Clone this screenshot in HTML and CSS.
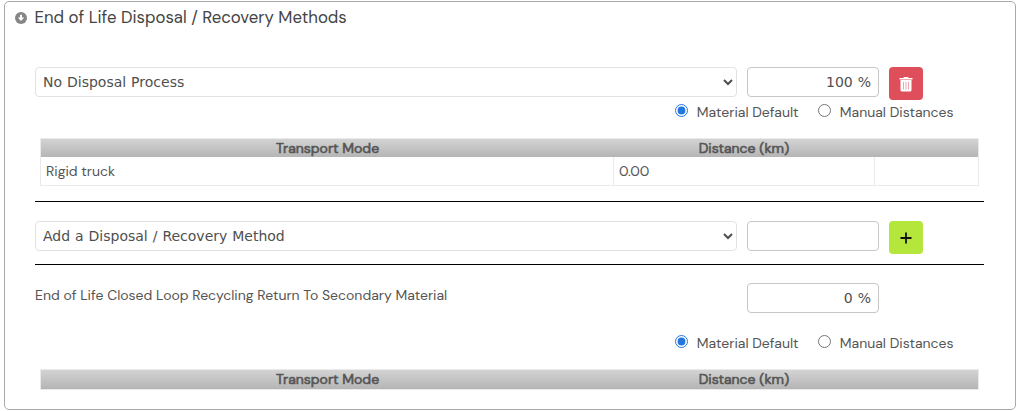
FILE: index.html
```html
<!DOCTYPE html>
<html lang="en">
<head>
<meta charset="utf-8">
<title>End of Life Disposal / Recovery Methods</title>
<link rel="stylesheet" href="styles.css">
</head>
<body>
<section class="panel">
  <header class="panel-title">
    <svg class="toggle" viewBox="0 0 12 12"><circle cx="6" cy="6" r="6" fill="#858585"/><path d="M5 2.8h2v2.8h2.2L6 9 2.8 5.600H5z" fill="#fff"/></svg>
    <h1>End of Life Disposal / Recovery Methods</h1>
  </header>
  <div class="row">
    <select class="method"><option>No Disposal Process</option></select>
    <input class="percent" type="text" value="100 %">
    <button class="btn remove" aria-label="Remove"><svg width="14" height="16" viewBox="0 0 14 16"><path d="M.5 2h3.800l.7-1h4l.7 1h3.800v1.500H.5z" fill="#fff"/><path d="M1.500 4h11v10q0 1.500-1.500 1.500H3q-1.500 0-1.500-1.500z" fill="#fff"/><path d="M4.500 6v7.500M7 6v7.500M9.500 6v7.500" stroke="#eba6ac"/></svg></button>
  </div>
  <div class="radios first">
    <label class="default"><input type="radio" name="disposal" checked><span>Material Default</span></label>
    <label class="manual"><input type="radio" name="disposal"><span>Manual Distances</span></label>
  </div>
  <div class="table">
    <div class="tr head"><span>Transport Mode</span><span>Distance (km)</span><span></span></div>
    <div class="tr body"><span>Rigid truck</span><span class="number">0.00</span><span></span></div>
  </div>
  <div class="row add">
    <select class="method" id="add"><option>Add a Disposal / Recovery Method</option></select>
    <input class="percent" type="text">
    <button class="btn plus" aria-label="Add"><svg width="12" height="12" viewBox="0 0 12 12"><path d="M6 .5v11M.5 6h11" stroke="#111" stroke-width="1.800"/></svg></button>
  </div>
  <div class="row recycle">
    <span class="caption">End of Life Closed Loop Recycling Return To Secondary Material</span>
    <input class="percent" type="text" value="0 %">
  </div>
  <div class="radios second">
    <label class="default"><input type="radio" name="recycle" checked><span>Material Default</span></label>
    <label class="manual"><input type="radio" name="recycle"><span>Manual Distances</span></label>
  </div>
  <div class="table">
    <div class="tr head tall"><span>Transport Mode</span><span>Distance (km)</span><span></span></div>
  </div>
</section>
</body>
</html>
```
FILE: styles.css
```css
* { box-sizing: border-box; }
body { margin: 0; background: #fff; color: #555; font: 14px/18px "DM Sans", Inter, sans-serif; }
.panel { width: 1012px; height: 409px; margin: 1px 0 0 4px; border: 1px solid #a9a9a9; border-radius: 5px; padding: 0 31px 0 30px; overflow: hidden; }
.panel-title { display: flex; align-items: flex-start; height: 65px; margin-left: -20px; padding-top: 5px; color: #444; }
.toggle { width: 12px; height: 12px; margin: 5px 7.5px 0 0; }
h1 { margin: 0; font-size: 16.8px; line-height: 20px; font-weight: 400; white-space: nowrap; }
.row { display: flex; align-items: flex-start; height: 33px; }
.method, .percent { height: 30px; border-radius: 4px; background: #fff; color: #4f4f4f; font: 14px Verdana, "DejaVu Sans", sans-serif; word-spacing: 0.5px; margin: 0; }
.method { width: 702px; border: 1px solid #e2e2e2; padding: 0 0 0 3px; margin-right: 10px; }
.percent { width: 132px; border: 1px solid #c6c6c6; padding: 1px 7px; text-align: right; margin-right: 10px; }
.btn { width: 34px; height: 33px; display: flex; align-items: center; justify-content: center; border: 0; border-radius: 4px; padding: 0; }
.remove { background: #df4e5b; }
.plus { background: #b5e63b; }
.radios { display: flex; padding-left: 640px; }
.radios.first { height: 38px; padding-top: 4px; }
.radios.second { height: 56px; padding-top: 22px; }
.radios label { display: flex; height: 18px; white-space: nowrap; }
.radios input { width: 13px; height: 13px; margin: 0 8.8px 0 0; accent-color: #2576dc; }
.radios span { line-height: 16px; }
.default { width: 143px; }
.table { width: 939px; margin-left: 5px; border: 1px solid #eaeaea; }
.tr { display: grid; grid-template-columns: 572px 261px 104px; }
.head { height: 18px; line-height: 19px; background: linear-gradient(#d3d3d3, #b5b5b5); text-align: center; -webkit-text-stroke: 0.6px #555; }
.head span { padding-left: 1px; }
.tall { height: 19px; }
.body { height: 28px; line-height: 29px; }
.body span { padding-left: 5px; }
.body span + span { border-left: 1px solid #eaeaea; }
.add { height: 64px; margin-top: 15px; border-top: 1px solid #000; border-bottom: 1px solid #000; padding-top: 19px; }
.recycle { height: 48px; padding-top: 18px; }
.caption { width: 712px; line-height: 24px; white-space: nowrap; }
```
